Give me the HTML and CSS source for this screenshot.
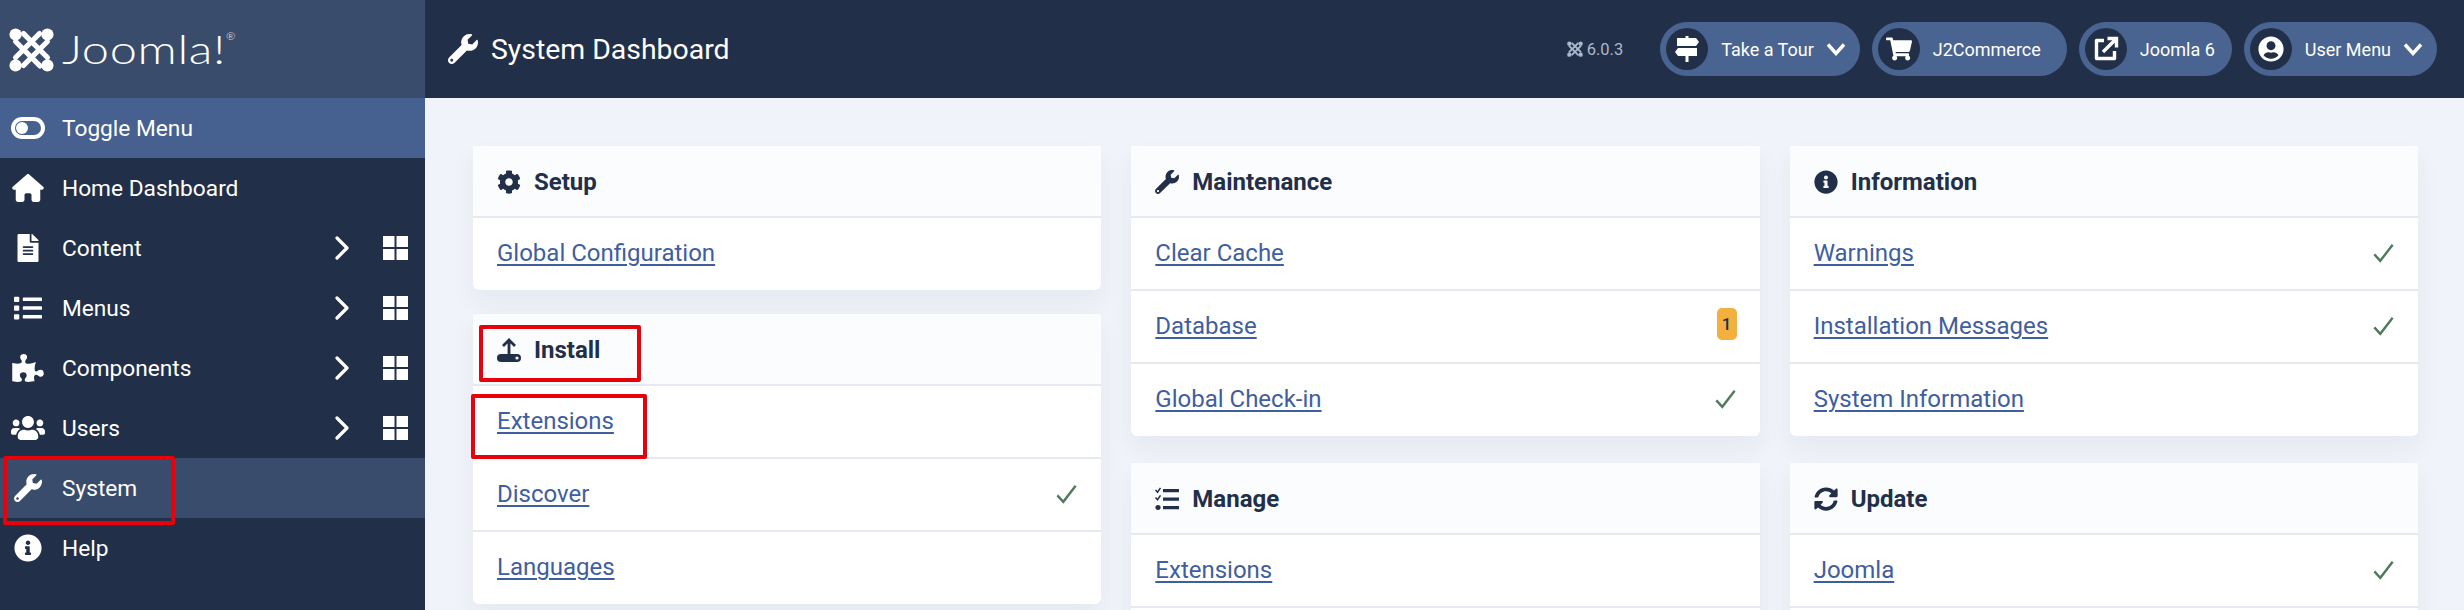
FILE: index.html
```html
<!DOCTYPE html>
<html lang="en">
<head>
    <meta charset="UTF-8">
    <meta name="viewport" content="width=device-width, initial-scale=1.0">
    <title>System Dashboard</title>
    <link rel="stylesheet" href="styles.css">
</head>
<body>
    <svg class="sprite" xmlns="http://www.w3.org/2000/svg">
        <symbol id="i-wrench" viewBox="0 0 512 512"><path d="M507.73 109.1c-2.24-9.03-13.54-12.09-20.12-5.51l-74.36 74.36-67.88-11.31-11.31-67.88 74.36-74.36c6.62-6.62 3.43-17.9-5.66-20.16-47.38-11.74-99.55.91-136.58 37.93-39.64 39.64-50.55 97.1-34.05 147.2L18.74 402.76c-24.99 24.99-24.99 65.51 0 90.5 24.99 24.99 65.51 24.99 90.5 0l213.21-213.21c50.12 16.71 107.47 5.68 147.37-34.22 37.07-37.07 49.7-89.32 37.91-136.73zM64 472c-13.25 0-24-10.75-24-24 0-13.26 10.75-24 24-24s24 10.74 24 24c0 13.25-10.75 24-24 24z"/></symbol>
        <symbol id="i-home" viewBox="0 0 576 512"><path d="M575.8 255.5c0 18-15 32.1-32 32.1h-32l.7 160.2c0 2.7-.2 5.4-.5 8.1V472c0 22.1-17.9 40-40 40H392c-22.1 0-40-17.9-40-40V384c0-17.7-14.3-32-32-32H256c-17.700 0-32 14.300-32 32v88c0 22.100-17.900 40-40 40H104c-22.100 0-40-17.900-40-40V287.600H32c-18 0-32-14-32-32.100c0-9 3-17 10-24L266.400 8c7-7 15-8 22-8s15 2 21 7L564.800 231.500c8 7 12 15 11 24z"/></symbol>
        <symbol id="i-file" viewBox="0 0 384 512"><path d="M224 136V0H24C10.7 0 0 10.7 0 24v464c0 13.3 10.7 24 24 24h336c13.3 0 24-10.7 24-24V160H248c-13.2 0-24-10.8-24-24zm64 236c0 6.6-5.4 12-12 12H108c-6.6 0-12-5.4-12-12v-8c0-6.6 5.4-12 12-12h168c6.6 0 12 5.4 12 12v8zm0-64c0 6.6-5.4 12-12 12H108c-6.6 0-12-5.4-12-12v-8c0-6.6 5.4-12 12-12h168c6.6 0 12 5.4 12 12v8zm0-72v8c0 6.6-5.4 12-12 12H108c-6.6 0-12-5.4-12-12v-8c0-6.6 5.4-12 12-12h168c6.6 0 12 5.4 12 12zm96-114.1v6.1H256V0h6.1c6.4 0 12.5 2.5 17 7l97.9 98c4.5 4.5 7 10.6 7 16.9z"/></symbol>
        <symbol id="i-list" viewBox="0 0 512 512"><path d="M80 368H16a16 16 0 0 0-16 16v64a16 16 0 0 0 16 16h64a16 16 0 0 0 16-16v-64a16 16 0 0 0-16-16zm0-320H16A16 16 0 0 0 0 64v64a16 16 0 0 0 16 16h64a16 16 0 0 0 16-16V64a16 16 0 0 0-16-16zm0 160H16a16 16 0 0 0-16 16v64a16 16 0 0 0 16 16h64a16 16 0 0 0 16-16v-64a16 16 0 0 0-16-16zm416 176H176a16 16 0 0 0-16 16v32a16 16 0 0 0 16 16h320a16 16 0 0 0 16-16v-32a16 16 0 0 0-16-16zm0-320H176a16 16 0 0 0-16 16v32a16 16 0 0 0 16 16h320a16 16 0 0 0 16-16V80a16 16 0 0 0-16-16zm0 160H176a16 16 0 0 0-16 16v32a16 16 0 0 0 16 16h320a16 16 0 0 0 16-16v-32a16 16 0 0 0-16-16z"/></symbol>
        <symbol id="i-puzzle" viewBox="0 0 576 512"><path d="M519.442 288.651c-41.519 0-59.5 31.593-82.058 31.593C377.409 320.244 432 144 432 144s-196.288 80-196.288-3.297c0-35.827 36.288-46.25 36.288-85.985C272 19.216 243.885 0 210.539 0c-34.654 0-66.366 18.891-66.366 56.346 0 41.364 31.711 59.277 31.711 81.75C175.885 207.719 0 166.758 0 166.758v333.237s178.635 41.047 178.635-28.662c0-22.473-40-40.107-40-81.471 0-37.456 29.25-56.346 63.577-56.346 33.673 0 61.788 19.216 61.788 54.717 0 39.735-36.288 50.158-36.288 85.985 0 60.803 129.675 25.73 181.23 25.73 0 0-34.725-120.101 25.827-120.101 35.962 0 46.423 36.152 86.308 36.152C556.712 416 576 387.99 576 354.443c0-34.199-18.962-65.792-56.558-65.792z"/></symbol>
        <symbol id="i-users" viewBox="0 0 640 512"><path d="M96 224c35.3 0 64-28.7 64-64s-28.7-64-64-64-64 28.7-64 64 28.7 64 64 64zm448 0c35.3 0 64-28.7 64-64s-28.7-64-64-64-64 28.7-64 64 28.7 64 64 64zm32 32h-64c-17.6 0-33.5 7.1-45.1 18.6 40.3 22.1 68.9 62 75.1 109.4h66c17.7 0 32-14.3 32-32v-32c0-35.3-28.7-64-64-64zm-256 0c61.9 0 112-50.1 112-112S381.9 32 320 32 208 82.1 208 144s50.1 112 112 112zm76.8 32h-8.3c-20.8 10-43.9 16-68.5 16s-47.6-6-68.5-16h-8.3C179.6 288 128 339.6 128 403.2V432c0 26.5 21.5 48 48 48h288c26.5 0 48-21.5 48-48v-28.8c0-63.6-51.6-115.2-115.2-115.2zm-223.7-13.4C161.5 263.1 145.6 256 128 256H64c-35.3 0-64 28.7-64 64v32c0 17.7 14.3 32 32 32h65.9c6.3-47.4 34.9-87.3 75.2-109.4z"/></symbol>
        <symbol id="i-info" viewBox="0 0 512 512"><path d="M256 8C119.043 8 8 119.083 8 256c0 136.997 111.043 248 248 248s248-111.003 248-248C504 119.083 392.957 8 256 8zm0 110c23.196 0 42 18.804 42 42s-18.804 42-42 42-42-18.804-42-42 18.804-42 42-42zm56 254c0 6.627-5.373 12-12 12h-88c-6.627 0-12-5.373-12-12v-24c0-6.627 5.373-12 12-12h12v-64h-12c-6.627 0-12-5.373-12-12v-24c0-6.627 5.373-12 12-12h64c6.627 0 12 5.373 12 12v100h12c6.627 0 12 5.373 12 12v24z"/></symbol>
        <symbol id="i-cog" viewBox="0 0 512 512"><path d="M487.4 315.7l-42.6-24.6c4.3-23.2 4.3-47 0-70.2l42.6-24.6c4.9-2.8 7.1-8.6 5.5-14-11.1-35.6-30-67.8-54.7-94.6-3.8-4.1-10-5.1-14.8-2.3L380.8 110c-17.9-15.4-38.5-27.3-60.8-35.1V25.8c0-5.6-3.9-10.5-9.4-11.7-36.7-8.2-74.3-7.8-109.2 0-5.5 1.2-9.4 6.1-9.4 11.7V75c-22.2 7.9-42.8 19.8-60.8 35.1L88.7 85.5c-4.9-2.8-11-1.9-14.8 2.3-24.7 26.7-43.6 58.9-54.7 94.6-1.7 5.4.6 11.2 5.5 14L67.3 221c-4.3 23.2-4.3 47 0 70.2l-42.6 24.6c-4.9 2.8-7.1 8.6-5.5 14 11.1 35.6 30 67.8 54.7 94.6 3.8 4.1 10 5.1 14.8 2.3l42.6-24.6c17.9 15.4 38.5 27.3 60.8 35.1v49.2c0 5.6 3.9 10.5 9.4 11.7 36.7 8.2 74.3 7.8 109.2 0 5.5-1.2 9.4-6.1 9.4-11.7v-49.2c22.2-7.9 42.8-19.8 60.8-35.1l42.6 24.6c4.9 2.8 11 1.9 14.8-2.3 24.7-26.7 43.6-58.9 54.7-94.6 1.5-5.5-.7-11.3-5.6-14.1zM256 336c-44.1 0-80-35.9-80-80s35.9-80 80-80 80 35.9 80 80-35.9 80-80 80z"/></symbol>
        <symbol id="i-sync" viewBox="0 0 512 512"><path d="M370.72 133.28C339.458 104.008 298.888 87.962 255.848 88c-77.458.068-144.328 53.178-162.791 126.85-1.344 5.363-6.122 9.15-11.651 9.15H24.103c-7.498 0-13.194-6.807-11.807-14.176C33.933 94.924 134.813 8 256 8c66.448 0 126.791 26.136 171.315 68.685L463.03 40.97C478.149 25.851 504 36.559 504 57.941V192c0 13.255-10.745 24-24 24H345.941c-21.382 0-32.09-25.851-16.971-40.971l41.75-41.749zM32 296h134.059c21.382 0 32.09 25.851 16.971 40.971l-41.75 41.75c31.262 29.273 71.835 45.319 114.876 45.28 77.418-.07 144.315-53.144 162.787-126.849 1.344-5.363 6.122-9.15 11.651-9.15h57.304c7.498 0 13.194 6.807 11.807 14.176C478.067 417.076 377.187 504 256 504c-66.448 0-126.791-26.136-171.315-68.685L48.97 471.03C33.851 486.149 8 475.441 8 454.059V320c0-13.255 10.745-24 24-24z"/></symbol>
        <symbol id="i-cart" viewBox="0 0 576 512"><path d="M528.12 301.319l47.273-208C578.806 78.301 567.391 64 551.99 64H159.208l-9.166-44.81C147.758 8.021 137.93 0 126.529 0H24C10.745 0 0 10.745 0 24v16c0 13.255 10.745 24 24 24h69.883l70.248 343.435C147.325 417.1 136 435.222 136 456c0 30.928 25.072 56 56 56s56-25.072 56-56c0-15.674-6.447-29.835-16.824-40h209.647C430.447 426.165 424 440.326 424 456c0 30.928 25.072 56 56 56s56-25.072 56-56c0-22.172-12.888-41.332-31.579-50.405l5.517-24.276c3.413-15.018-8.002-29.319-23.403-29.319H218.117l-6.545-32h293.145c11.206 0 20.92-7.754 23.403-18.681z"/></symbol>
        <symbol id="i-user" viewBox="0 0 496 512"><path d="M248 8C111 8 0 119 0 256s111 248 248 248 248-111 248-248S385 8 248 8zm0 96c48.6 0 88 39.4 88 88s-39.4 88-88 88-88-39.4-88-88 39.4-88 88-88zm0 344c-58.7 0-111.3-26.6-146.5-68.2 18.8-35.4 55.6-59.8 98.5-59.8 2.4 0 4.8.4 7.1 1.1 13 4.2 26.6 6.9 40.9 6.9 14.3 0 28-2.7 40.9-6.9 2.3-.7 4.7-1.1 7.1-1.1 42.9 0 79.7 24.4 98.5 59.8C359.3 421.4 306.7 448 248 448z"/></symbol>
        <symbol id="i-check" viewBox="0 0 24 24"><path d="M2 13.5l6.500 7L22 3" fill="none" stroke="currentColor" stroke-width="2.600"/></symbol>
        <symbol id="i-right" viewBox="0 0 14 24"><path d="M2 2l10 10L2 22" fill="none" stroke="currentColor" stroke-width="3.200" stroke-linecap="round" stroke-linejoin="round"/></symbol>
        <symbol id="i-down" viewBox="0 0 20 14"><path d="M2 2.500l8 9 8-9" fill="none" stroke="currentColor" stroke-width="3.400"/></symbol>
        <symbol id="i-tile" viewBox="0 0 25 24"><path d="M0 0h11.500v11H0zM13.500 0H25v11H13.500zM0 13h11.500v11H0zM13.500 13H25v11H13.500z"/></symbol>
        <symbol id="i-toggle" viewBox="0 0 34 22"><rect width="34" height="22" rx="11"/><rect x="4" y="4" width="26" height="14" rx="7" fill="#46608f"/><circle cx="11" cy="11" r="6"/></symbol>
        <symbol id="i-upload" viewBox="0 0 24 24"><path d="M12 16V2M6 8l6-6 6 6" fill="none" stroke="currentColor" stroke-width="2.800"/><rect y="16" width="24" height="8" rx="4"/><circle cx="20" cy="20" r="1.600" fill="#fbfcfe"/></symbol>
        <symbol id="i-tasks" viewBox="0 0 24 24"><path d="M.5 3l2 2.200L5.500.8M.5 10.500l2 2.200 3-4.400" fill="none" stroke="currentColor" stroke-width="1.500"/><circle cx="3" cy="20.500" r="2.600"/><path d="M8 2h16v3.200H8zM8 10.500h16v3.200H8zM8 19h16v3.200H8z"/></symbol>
        <symbol id="i-signs" viewBox="0 0 24 26"><path d="M10.500 0h3v2h7.500l3 4-3 4H2V2h8.500zM3 12h19v8h-8.500v6h-3v-6H3l-3-4z"/></symbol>
        <symbol id="i-open" viewBox="0 0 26 26"><path d="M11 4.500H3.500v18h18V15" fill="none" stroke="currentColor" stroke-width="3.400" stroke-linejoin="round"/><path d="M10 16L22 4M14.500 2.500h9v9" fill="none" stroke="currentColor" stroke-width="3.400"/></symbol>
        <symbol id="i-joomla" viewBox="0 0 48 48">
            <g fill="none" stroke="currentColor" stroke-width="5.500" stroke-linecap="round">
                <path d="M7 15.500L33 41.500"/>
                <path d="M15.500 7L41 32.500"/>
                <path d="M7 32.500L32.500 7"/>
                <path d="M15.500 41L41 15.500"/>
            </g>
            <circle cx="7" cy="8" r="6.500"/><circle cx="41" cy="8" r="6.500"/><circle cx="7" cy="41" r="6.500"/><circle cx="41" cy="41" r="6.500"/>
        </symbol>
    </svg>

    <div class="page">
        <aside class="sidebar">
            <div class="brand">
                <svg class="brand-icon"><use href="#i-joomla"/></svg>
                <span class="brand-name">Joomla!<sup>®</sup></span>
            </div>
            <a class="nav-item toggle"><svg class="nav-icon"><use href="#i-toggle"/></svg><span>Toggle Menu</span></a>
            <a class="nav-item"><svg class="nav-icon"><use href="#i-home"/></svg><span>Home Dashboard</span></a>
            <a class="nav-item"><svg class="nav-icon"><use href="#i-file"/></svg><span>Content</span><svg class="nav-arrow"><use href="#i-right"/></svg><svg class="nav-tile"><use href="#i-tile"/></svg></a>
            <a class="nav-item"><svg class="nav-icon"><use href="#i-list"/></svg><span>Menus</span><svg class="nav-arrow"><use href="#i-right"/></svg><svg class="nav-tile"><use href="#i-tile"/></svg></a>
            <a class="nav-item"><svg class="nav-icon"><use href="#i-puzzle"/></svg><span>Components</span><svg class="nav-arrow"><use href="#i-right"/></svg><svg class="nav-tile"><use href="#i-tile"/></svg></a>
            <a class="nav-item"><svg class="nav-icon"><use href="#i-users"/></svg><span>Users</span><svg class="nav-arrow"><use href="#i-right"/></svg><svg class="nav-tile"><use href="#i-tile"/></svg></a>
            <a class="nav-item active"><svg class="nav-icon"><use href="#i-wrench"/></svg><span>System</span><i class="mark mark-system"></i></a>
            <a class="nav-item"><svg class="nav-icon"><use href="#i-info"/></svg><span>Help</span></a>
        </aside>

        <div class="main">
            <header class="topbar">
                <svg class="title-icon"><use href="#i-wrench"/></svg>
                <h1>System Dashboard</h1>
                <div class="version"><svg class="version-icon"><use href="#i-joomla"/></svg>6.0.3</div>
                <a class="pill has-menu"><span class="pill-icon"><svg><use href="#i-signs"/></svg></span>Take a Tour<svg class="pill-down"><use href="#i-down"/></svg></a>
                <a class="pill pill-wide"><span class="pill-icon"><svg><use href="#i-cart"/></svg></span>J2Commerce</a>
                <a class="pill"><span class="pill-icon"><svg><use href="#i-open"/></svg></span>Joomla 6</a>
                <a class="pill has-menu"><span class="pill-icon"><svg><use href="#i-user"/></svg></span>User Menu<svg class="pill-down"><use href="#i-down"/></svg></a>
            </header>

            <main class="content">
                <div class="col col-tight">
                    <section class="card">
                        <h2 class="card-head"><svg class="head-icon"><use href="#i-cog"/></svg>Setup</h2>
                        <div class="row"><a href="#">Global Configuration</a></div>
                    </section>
                    <section class="card">
                        <h2 class="card-head"><svg class="head-icon"><use href="#i-upload"/></svg>Install<i class="mark mark-install"></i></h2>
                        <div class="row"><a href="#">Extensions</a><i class="mark mark-ext"></i></div>
                        <div class="row"><a href="#">Discover</a><svg class="check"><use href="#i-check"/></svg></div>
                        <div class="row"><a href="#">Languages</a></div>
                    </section>
                </div>
                <div class="col">
                    <section class="card">
                        <h2 class="card-head"><svg class="head-icon"><use href="#i-wrench"/></svg>Maintenance</h2>
                        <div class="row"><a href="#">Clear Cache</a></div>
                        <div class="row"><a href="#">Database</a><span class="badge">1</span></div>
                        <div class="row"><a href="#">Global Check-in</a><svg class="check"><use href="#i-check"/></svg></div>
                    </section>
                    <section class="card">
                        <h2 class="card-head"><svg class="head-icon"><use href="#i-tasks"/></svg>Manage</h2>
                        <div class="row"><a href="#">Extensions</a></div>
                        <div class="row"></div>
                    </section>
                </div>
                <div class="col">
                    <section class="card">
                        <h2 class="card-head"><svg class="head-icon"><use href="#i-info"/></svg>Information</h2>
                        <div class="row"><a href="#">Warnings</a><svg class="check"><use href="#i-check"/></svg></div>
                        <div class="row"><a href="#">Installation Messages</a><svg class="check"><use href="#i-check"/></svg></div>
                        <div class="row"><a href="#">System Information</a></div>
                    </section>
                    <section class="card">
                        <h2 class="card-head"><svg class="head-icon"><use href="#i-sync"/></svg>Update</h2>
                        <div class="row"><a href="#">Joomla</a><svg class="check"><use href="#i-check"/></svg></div>
                        <div class="row"></div>
                    </section>
                </div>
            </main>
        </div>
    </div>
</body>
</html>
```

FILE: styles.css
```css
*{
    padding: 0;
    margin: 0;
    box-sizing: border-box;
}
body{
    height: 100vh;
    overflow: hidden;
    font-family: Roboto, "Liberation Sans", sans-serif;
    background-color: #f0f3f9;
}
svg{
    fill: currentColor;
    flex: none;
}
.sprite{
    display: none;
}
.page{
    display: grid;
    grid-template-columns: 425px 1fr;
    height: 100vh;
}

/* sidebar */
.sidebar{
    background-color: #222f48;
    color: #fff;
}
.brand{
    display: flex;
    align-items: center;
    height: 98px;
    padding-left: 9px;
    background-color: #3a4c6b;
}
.brand-icon{
    width: 45px;
    height: 45px;
}
.brand-name{
    margin-left: 8px;
    font-family: Lato, sans-serif;
    font-weight: 300;
    font-size: 39px;
    line-height: 1;
    letter-spacing: 0.5px;
    transform: scaleX(1.25);
    transform-origin: left center;
}
.brand-name sup{
    font-size: 9px;
    vertical-align: 24px;
    line-height: 0;
}
.nav-item{
    position: relative;
    display: flex;
    align-items: center;
    height: 60px;
    padding-left: 11px;
    font-size: 22.7px;
}
.nav-item span{
    flex: 1;
}
.toggle{
    background-color: #46608f;
}
.active{
    background-color: #394c6b;
}
.nav-icon{
    width: 34px;
    height: 28px;
    margin-right: 17px;
}
.nav-arrow{
    width: 14px;
    height: 24px;
    margin-right: 34px;
}
.nav-tile{
    width: 25px;
    height: 24px;
    margin-right: 17px;
}
.mark{
    position: absolute;
    border: 4px solid #e8000b;
    border-radius: 2px;
}
.mark-system{
    left: 3px;
    top: -2px;
    width: 172px;
    height: 69px;
}
.mark-install{
    left: 6px;
    top: 11px;
    width: 162px;
    height: 57px;
}
.mark-ext{
    left: -2px;
    top: 8px;
    width: 176px;
    height: 65px;
}

/* top bar */
.topbar{
    display: flex;
    align-items: center;
    height: 98px;
    padding: 0 27px 0 23px;
    background-color: #222f48;
    color: #fff;
}
.title-icon{
    width: 30px;
    height: 30px;
    margin-right: 13px;
}
.topbar h1{
    flex: 1;
    font-size: 28.4px;
    font-weight: 400;
}
.version{
    display: flex;
    align-items: center;
    gap: 4px;
    margin-right: 25px;
    font-size: 16.5px;
    color: #aab8cc;
}
.version-icon{
    width: 16px;
    height: 16px;
}
.pill{
    display: flex;
    align-items: center;
    height: 54px;
    margin-left: 12px;
    padding: 0 17px 0 6px;
    border-radius: 27px;
    background-color: #4a6491;
    font-size: 18px;
}
.pill-wide{
    padding-right: 26px;
}
.has-menu{
    padding-right: 14px;
}
.pill-icon{
    display: flex;
    align-items: center;
    justify-content: center;
    width: 42px;
    height: 42px;
    margin-right: 13px;
    border-radius: 50%;
    background-color: #222f48;
}
.pill-icon svg{
    width: 26px;
    height: 26px;
}
.pill-down{
    width: 20px;
    height: 14px;
    margin-left: 12px;
}

/* cards */
.content{
    display: grid;
    grid-template-columns: repeat(3, 1fr);
    gap: 30px;
    padding: 48px 46px 0 48px;
}
.col{
    display: flex;
    flex-direction: column;
    gap: 27px;
}
.col-tight{
    gap: 24px;
}
.card{
    background-color: #fff;
    border-radius: 6px;
    box-shadow: 0 12px 24px rgba(50, 70, 110, 0.06);
}
.card-head{
    position: relative;
    display: flex;
    align-items: center;
    height: 72px;
    padding: 2px 0 0 24px;
    border-bottom: 2px solid #e6e9ef;
    background-color: #fbfcfe;
    font-size: 24px;
    font-weight: 700;
    color: #222f48;
}
.head-icon{
    width: 24px;
    height: 24px;
    margin-right: 13px;
}
.row{
    position: relative;
    display: flex;
    align-items: center;
    justify-content: space-between;
    height: 73px;
    padding: 0 24px 2px;
    border-bottom: 2px solid #e6e9ef;
    font-size: 24px;
}
.card > .row:last-child{
    height: 72px;
    border-bottom: none;
}
.row a{
    color: #3f5e9f;
    text-decoration-thickness: 2px;
    text-underline-offset: 3px;
}
.check{
    width: 23px;
    height: 22px;
    margin-right: -1px;
    color: #4f7a5c;
}
.badge{
    width: 20px;
    height: 32px;
    margin-top: -4px;
    margin-right: -1px;
    border-radius: 5px;
    background-color: #f4b03e;
    color: #222f48;
    font-size: 17px;
    font-weight: 500;
    line-height: 32px;
    text-align: center;
}
```
